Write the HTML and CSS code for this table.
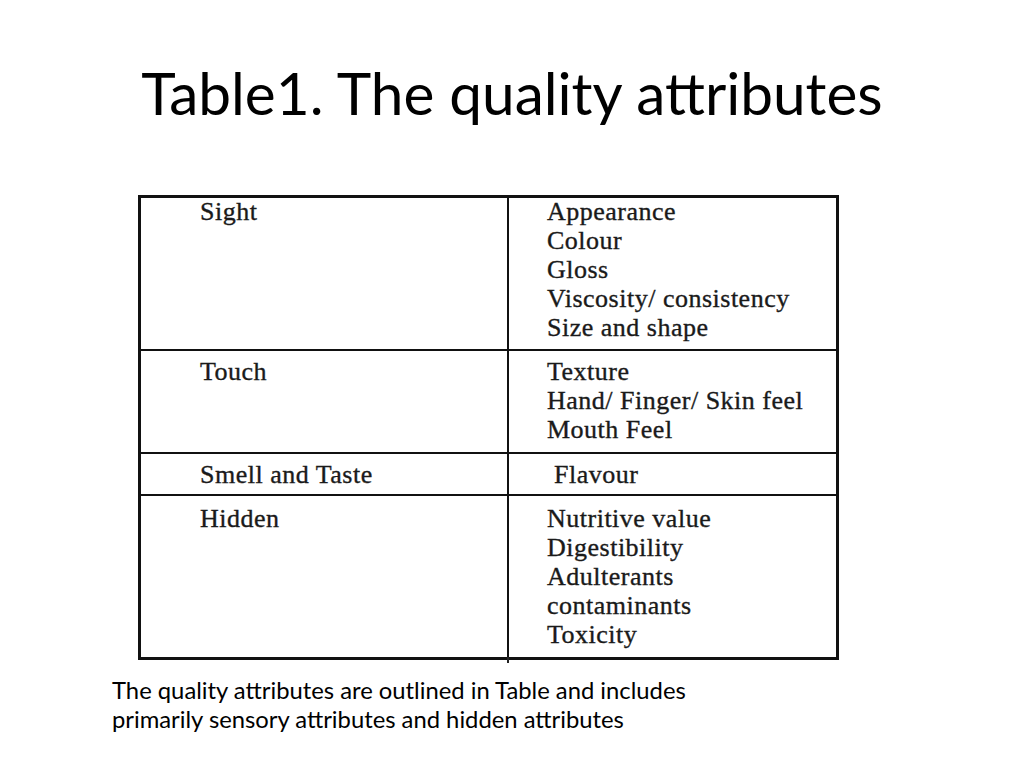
FILE: index.html
```html
<!DOCTYPE html>
<html>
<head>
<meta charset="utf-8">
<title>Table1. The quality attributes</title>
<link rel="stylesheet" href="styles.css">
</head>
<body>
<div class="slide">
  <h1 class="title">Table1. The quality attributes</h1>
  <div class="table">
    <div class="row r1">
      <div class="cell left"><div>Sight</div></div>
      <div class="cell right">
        <div>Appearance</div>
        <div>Colour</div>
        <div>Gloss</div>
        <div>Viscosity/ consistency</div>
        <div>Size and shape</div>
      </div>
    </div>
    <div class="row r2">
      <div class="cell left"><div>Touch</div></div>
      <div class="cell right">
        <div>Texture</div>
        <div>Hand/ Finger/ Skin feel</div>
        <div>Mouth Feel</div>
      </div>
    </div>
    <div class="row r3">
      <div class="cell left"><div>Smell and Taste</div></div>
      <div class="cell right"><div class="indent">Flavour</div></div>
    </div>
    <div class="row r4">
      <div class="cell left"><div>Hidden</div></div>
      <div class="cell right">
        <div>Nutritive value</div>
        <div>Digestibility</div>
        <div>Adulterants</div>
        <div>contaminants</div>
        <div>Toxicity</div>
      </div>
    </div>
  </div>
  <p class="caption">The quality attributes are outlined in Table and includes<br>primarily sensory attributes and hidden attributes</p>
</div>
</body>
</html>
```
FILE: styles.css
```css
html, body {
  margin: 0;
  padding: 0;
  background: #ffffff;
}
.slide {
  width: 1024px;
  height: 768px;
  overflow: hidden;
  display: flex;
  flex-direction: column;
}
.title {
  flex: none;
  margin: 0;
  padding-top: 57px;
  height: 195px;
  box-sizing: border-box;
  text-align: center;
  font-family: Lato, "Liberation Sans", sans-serif;
  font-weight: normal;
  font-size: 58.5px;
  line-height: 70px;
  color: #000;
}
.table {
  flex: none;
  position: relative;
  margin-left: 138px;
  width: 701px;
  box-sizing: border-box;
  border: 3px solid #111;
  font-family: "Liberation Serif", serif;
  font-size: 26px;
  letter-spacing: 0.5px;
  color: #1a1a1a;
  -webkit-text-stroke: 0.35px #1a1a1a;
}
.table::after {
  content: "";
  position: absolute;
  left: 366px;
  bottom: -6px;
  width: 2px;
  height: 6px;
  background: #222;
}
.row {
  display: grid;
  grid-template-columns: 368px 1fr;
  border-top: 2px solid #111;
  box-sizing: border-box;
}
.row:first-child {
  border-top: none;
}
.cell {
  box-sizing: border-box;
  line-height: 29px;
}
.left {
  padding-left: 59px;
  border-right: 2px solid #111;
}
.right {
  padding-left: 38px;
}
.indent {
  padding-left: 7px;
}
.r1 { height: 151px; }
.r1 .cell > div:first-child { margin-top: -1px; }
.r2 { height: 103px; }
.r2 .cell { padding-top: 6px; }
.r3 { height: 42px; }
.r3 .cell { padding-top: 6px; }
.r4 { height: 163px; }
.r4 .cell { padding-top: 8px; }
.caption {
  flex: none;
  margin: 16px 0 0 112px;
  font-family: Lato, "Liberation Sans", sans-serif;
  font-size: 23.8px;
  line-height: 28.5px;
  color: #000;
}
```
